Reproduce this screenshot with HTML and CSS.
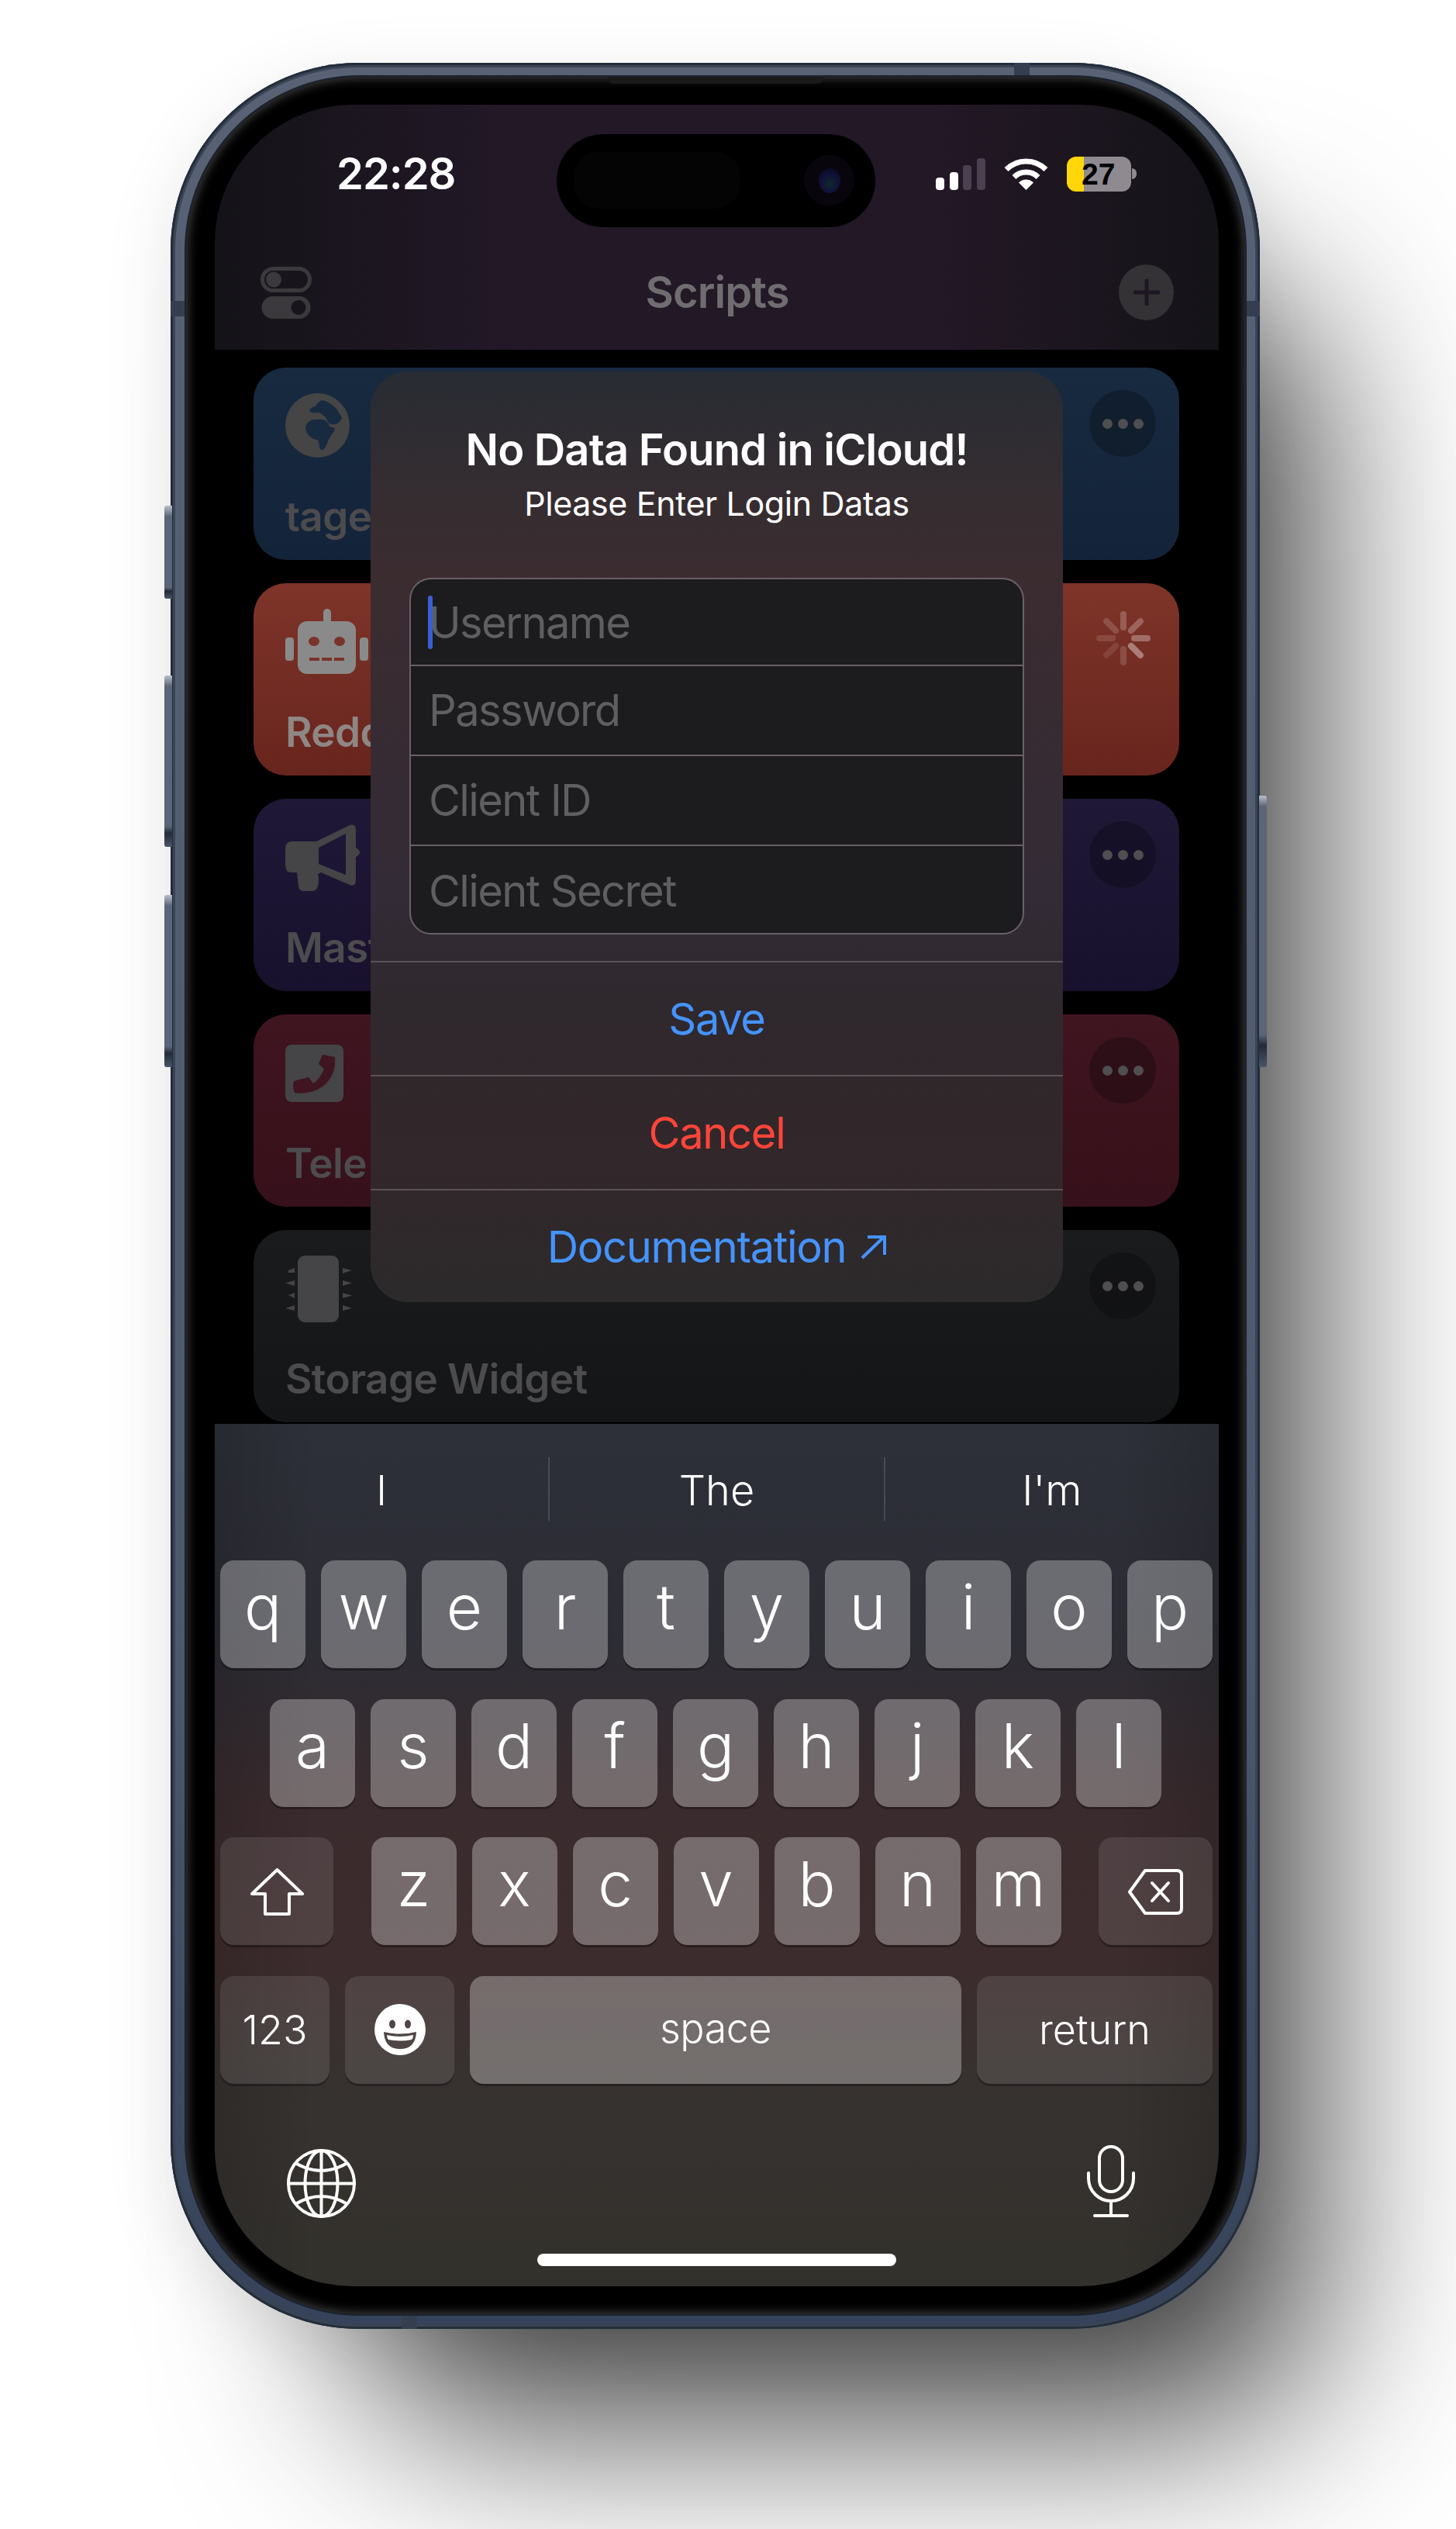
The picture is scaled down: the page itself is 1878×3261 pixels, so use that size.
FILE: index.html
```html
<!DOCTYPE html>
<html lang="en">
<head>
    <meta charset="UTF-8">
    <meta name="viewport" content="width=device-width, initial-scale=1.0">
    <title>Scripts</title>
    <link rel="stylesheet" href="styles.css">
</head>
<body>
<div class="stage">
    <div class="frame">
        <span class="side-btn side-btn-mute"></span>
        <span class="side-btn side-btn-up"></span>
        <span class="side-btn side-btn-down"></span>
        <span class="side-btn side-btn-power"></span>
        <span class="band band-top"></span>
        <span class="band band-left"></span>
        <span class="band band-right"></span>
        <span class="band band-bottom"></span>

        <div class="bezel">
            <span class="speaker"></span>
            <div class="screen">

                <div class="island">
                    <span class="island-sensor"></span>
                    <span class="island-camera"><span class="island-lens"></span></span>
                </div>

                <header class="head">
                    <div class="status">
                        <span class="time">22:28</span>
                        <div class="status-icons">
                            <svg class="ic-signal" viewBox="0 0 64 41">
                                <rect x="0" y="25" width="11" height="16" rx="4" fill="#fff"/>
                                <rect x="18" y="18" width="11" height="23" rx="4" fill="#fff"/>
                                <rect x="35" y="9" width="11" height="32" rx="4" fill="#4a4050"/>
                                <rect x="53" y="0" width="11" height="41" rx="4" fill="#4a4050"/>
                            </svg>
                            <svg class="ic-wifi" viewBox="0 0 57 41">
                                <path d="M3 14.500a36 36 0 0 1 51 0M13 24.500a22 22 0 0 1 31 0" fill="none" stroke="#fff" stroke-width="7"/>
                                <path d="M28.500 41L19 31.500a13.500 13.500 0 0 1 19 0z" fill="#fff"/>
                            </svg>
                            <div class="battery">
                                <div class="battery-body">27</div>
                                <span class="battery-nub"></span>
                            </div>
                        </div>
                    </div>
                    <div class="nav">
                        <svg class="ic-toggles" viewBox="0 0 66 67">
                            <rect x="2.500" y="2.500" width="61" height="28" rx="14" fill="none" stroke="#3b393c" stroke-width="5"/>
                            <circle cx="17" cy="16.500" r="10" fill="#3b393c"/>
                            <path fill-rule="evenodd" d="M16 38h34a14.500 14.500 0 0 1 0 29H16a14.500 14.500 0 0 1 0-29zM49 43a9.500 9.500 0 1 0 0 19a9.500 9.500 0 0 0 0-19z" fill="#3b393c"/>
                        </svg>
                        <h1 class="nav-title">Scripts</h1>
                        <div class="nav-add">
                            <svg viewBox="0 0 34 34" class="ic-plus"><path d="M17 2v30M2 17h30" stroke="#1e1722" stroke-width="5" stroke-linecap="round"/></svg>
                        </div>
                    </div>
                </header>

                <main class="list">
                    <div class="card card-blue">
                        <div class="card-top">
                            <svg class="card-icon ic-earth" viewBox="0 0 83 83">
                                <circle cx="41.500" cy="41.500" r="41.500" fill="#454545"/>
                                <path d="M31 22Q35 17 39 17Q41 12 47 9Q54 10 60 15Q66 19 69 25L73 32Q71 37 67 39Q63 41 60 40Q56 40 55 37L53 33Q48 26 43 25Q36 26 32 24z" fill="#182a40"/>
                                <path d="M26 46Q26 40 30 37Q35 33 41 34Q48 33 53 36Q56 39 57 43L64 45Q63 50 60 53Q56 58 54 65Q51 72 48 73Q44 73 44 70Q44 65 42 60Q36 60 32 56Q27 52 26 46z" fill="#182a40"/>
                            </svg>
                            <div class="more"><i></i><i></i><i></i></div>
                        </div>
                        <div class="card-label">tage</div>
                    </div>

                    <div class="card card-red">
                        <div class="card-top">
                            <svg class="card-icon ic-robot" viewBox="0 0 107 84">
                                <rect x="49" y="0" width="10" height="20" rx="5" fill="#8a8a8a"/>
                                <rect x="16" y="16" width="75" height="68" rx="12" fill="#8a8a8a"/>
                                <rect x="0" y="37" width="11" height="30" rx="4" fill="#8a8a8a"/>
                                <rect x="96" y="37" width="11" height="30" rx="4" fill="#8a8a8a"/>
                                <ellipse cx="37" cy="42" rx="7" ry="6" fill="#7a3329"/>
                                <ellipse cx="70" cy="42" rx="7" ry="6" fill="#7a3329"/>
                                <path d="M31 65H44M47 65H60M63 65H76" stroke="#7a3329" stroke-width="4"/>
                            </svg>
                            <svg class="spinner" viewBox="-35 -35 70 70" stroke="#fff" stroke-width="8" stroke-linecap="round">
                                <line y1="-14" y2="-31" stroke-opacity=".22"/>
                                <line y1="-14" y2="-31" stroke-opacity=".25" transform="rotate(45)"/>
                                <line y1="-14" y2="-31" stroke-opacity=".3" transform="rotate(90)"/>
                                <line y1="-14" y2="-31" stroke-opacity=".38" transform="rotate(135)"/>
                                <line y1="-14" y2="-31" stroke-opacity=".15" transform="rotate(180)"/>
                                <line y1="-14" y2="-31" stroke-opacity=".1" transform="rotate(225)"/>
                                <line y1="-14" y2="-31" stroke-opacity=".12" transform="rotate(270)"/>
                                <line y1="-14" y2="-31" stroke-opacity=".16" transform="rotate(315)"/>
                            </svg>
                        </div>
                        <div class="card-label">Redd</div>
                    </div>

                    <div class="card card-purple">
                        <div class="card-top">
                            <svg class="card-icon ic-horn" viewBox="0 0 96 86">
                                <path fill-rule="evenodd" d="M8 22H40L83 1Q91-1 91 7V30Q96 33 96 36Q96 39 91 42V72Q91 81 83 78L46 62L42 64Q44 70 42 80Q40 86 34 86H24Q18 86 17 80L15 62H8Q0 62 0 52V32Q0 22 8 22zM43 30V51L78 65V12z" fill="#454446"/>
                            </svg>
                            <div class="more"><i></i><i></i><i></i></div>
                        </div>
                        <div class="card-label">Mast</div>
                    </div>

                    <div class="card card-wine">
                        <div class="card-top">
                            <svg class="card-icon ic-phone" viewBox="0 0 75 74">
                                <rect width="75" height="74" rx="8" fill="#454446"/>
                                <path d="M11 47L30 42L36 50Q45 44 50 31L43 25L48 13L64 16Q66 40 48 54Q32 65 12 62Q9 55 11 47z" fill="#3e1520"/>
                            </svg>
                            <div class="more"><i></i><i></i><i></i></div>
                        </div>
                        <div class="card-label">Tele</div>
                    </div>

                    <div class="card card-gray">
                        <div class="card-top">
                            <svg class="card-icon ic-chip" viewBox="0 0 86 86" fill="#454446">
                                <rect x="16" width="53" height="86" rx="9"/>
                                <path d="M4 19L12 16V22L4 22zM0 35.500L12 32V39zM4 51L12 48V55zM0 68L12 64V71z"/>
                                <path d="M74 16L86 19L74 23zM74 32L86 35.500L74 39zM74 48L86 51.500L74 55zM74 64L86 68L74 71z"/>
                            </svg>
                            <div class="more"><i></i><i></i><i></i></div>
                        </div>
                        <div class="card-label">Storage Widget</div>
                    </div>
                </main>

                <section class="keyboard">
                    <div class="suggest">
                        <div class="suggest-cell">I</div>
                        <div class="suggest-cell">The</div>
                        <div class="suggest-cell">I'm</div>
                    </div>

                    <div class="kb-rows">
                        <div class="kb-row">
                            <div class="key">q</div><div class="key">w</div><div class="key">e</div><div class="key">r</div><div class="key">t</div><div class="key">y</div><div class="key">u</div><div class="key">i</div><div class="key">o</div><div class="key">p</div>
                        </div>
                        <div class="kb-row kb-row-center">
                            <div class="key">a</div><div class="key">s</div><div class="key">d</div><div class="key">f</div><div class="key">g</div><div class="key">h</div><div class="key">j</div><div class="key">k</div><div class="key">l</div>
                        </div>
                        <div class="kb-row kb-row-split">
                            <div class="key key-dark key-shift">
                                <svg class="ic-shift" viewBox="0 0 69 61"><path d="M34.500 2L67 33H50V59H19V33H2z" fill="none" stroke="#fff" stroke-width="4" stroke-linejoin="round"/></svg>
                            </div>
                            <div class="kb-letters">
                                <div class="key">z</div><div class="key">x</div><div class="key">c</div><div class="key">v</div><div class="key">b</div><div class="key">n</div><div class="key">m</div>
                            </div>
                            <div class="key key-dark key-delete">
                                <svg class="ic-delete" viewBox="0 0 71 59" fill="none" stroke="#fff" stroke-width="4" stroke-linecap="round" stroke-linejoin="round">
                                    <path d="M22 2H63Q69 2 69 8V51Q69 57 63 57H22L2 29.500z"/>
                                    <path d="M31 18L52 41M52 18L31 41"/>
                                </svg>
                            </div>
                        </div>
                        <div class="kb-row">
                            <div class="key key-dark key-word key-123">123</div>
                            <div class="key key-dark key-emoji">
                                <svg class="ic-emoji" viewBox="0 0 66 66">
                                    <circle cx="33" cy="33" r="33" fill="#fff"/>
                                    <ellipse cx="23" cy="26" rx="4" ry="5.500" fill="#4f4745"/>
                                    <ellipse cx="43" cy="26" rx="4" ry="5.500" fill="#4f4745"/>
                                    <path d="M12 36Q33 41 54 36Q53 58 33 58Q13 58 12 36z" fill="#4f4745"/>
                                    <path d="M16 40Q33 44 50 40Q50 44 48 46Q33 49 18 46Q16 44 16 40z" fill="#fff"/>
                                </svg>
                            </div>
                            <div class="key key-word key-space">space</div>
                            <div class="key key-dark key-word key-return">return</div>
                        </div>
                    </div>

                    <div class="kb-bottom">
                        <svg class="ic-globe" viewBox="0 0 89 89" fill="none" stroke="#fff" stroke-width="4">
                            <circle cx="44.500" cy="44.500" r="42.500"/>
                            <ellipse cx="44.500" cy="44.500" rx="21" ry="42.500"/>
                            <path d="M44.500 2V87M2 44.500H87M11 18Q44.500 38 78 18M11 71Q44.500 51 78 71"/>
                        </svg>
                        <svg class="ic-mic" viewBox="0 0 62 93" fill="none" stroke="#fff" stroke-width="4" stroke-linecap="round">
                            <rect x="16" y="2" width="30" height="58" rx="15"/>
                            <path d="M2 36V43A29 29 0 0 0 60 43V36M31 72V90M10 91H52"/>
                        </svg>
                    </div>
                    <div class="home-bar"></div>
                </section>

                <div class="dialog">
                    <h2 class="dialog-title">No Data Found in iCloud!</h2>
                    <p class="dialog-sub">Please Enter Login Datas</p>
                    <div class="fields">
                        <div class="field field-active"><span class="caret"></span>Username</div>
                        <div class="field">Password</div>
                        <div class="field">Client ID</div>
                        <div class="field">Client Secret</div>
                    </div>
                    <div class="dialog-btn btn-blue">Save</div>
                    <div class="dialog-btn btn-red">Cancel</div>
                    <div class="dialog-btn btn-blue">Documentation
                        <svg class="ic-arrow" viewBox="0 0 33 32" fill="none" stroke="#4593ff" stroke-width="4"><path d="M2 30L29 4M9 3H31V26"/></svg>
                    </div>
                </div>

            </div>
        </div>
    </div>
</div>
</body>
</html>
```

FILE: styles.css
```css
* {
    box-sizing: border-box;
}

body {
    margin: 0;
    background-color: #fff;
    font-family: Inter, "Liberation Sans", sans-serif;
    color: #fff;
    overflow: hidden;
}

.stage {
    width: 1878px;
    height: 3261px;
    padding: 81px 0 0 220px;
    overflow: hidden;
}

/* phone body */
.frame {
    position: relative;
    width: 1405px;
    height: 2922px;
    padding: 18px 19px 19px 20px;
    border-radius: 242px;
    background: linear-gradient(180deg, #586274, #4c586b 70%, #354259);
    box-shadow: inset 0 0 0 3px #242d3c, inset 0 0 0 6px #394454,
        157px 209px 245px -82px rgba(0, 0, 0, .72), 0 20px 90px rgba(0, 0, 0, .1);
}

.side-btn {
    position: absolute;
    left: -8px;
    width: 10px;
    border-radius: 3px 0 0 3px;
    background: linear-gradient(180deg, #b9bfca 0, #5b6577 14px, #5b6577 88%, #232b38 92%, #4a5568 100%);
}

.side-btn-mute { top: 571px; height: 120px; }
.side-btn-up { top: 790px; height: 221px; }
.side-btn-down { top: 1073px; height: 222px; }
.side-btn-power { left: auto; right: -9px; top: 945px; height: 350px; border-radius: 0 3px 3px 0; }

.band {
    position: absolute;
    background-color: #353e4f;
}

.band-top { top: 0; left: 1088px; width: 20px; height: 18px; }
.band-left { top: 307px; left: 0; width: 20px; height: 20px; }
.band-right { top: 307px; right: 0; width: 19px; height: 20px; }
.band-bottom { bottom: 0; left: 298px; width: 20px; height: 19px; }

.bezel {
    position: relative;
    height: 100%;
    padding: 36px 34px 36px 37px;
    border-radius: 224px;
    background-color: #000;
    box-shadow: 0 0 0 2px #1b2230, inset 0 0 14px 1px #4a4a4a;
}

.speaker {
    position: absolute;
    top: 0;
    left: 544px;
    width: 278px;
    height: 9px;
    border-radius: 0 0 8px 8px;
    background-color: #1a1a1b;
}

.screen {
    position: relative;
    display: flex;
    flex-direction: column;
    height: 100%;
    border-radius: 178px;
    background-color: #000;
    overflow: hidden;
}

/* dynamic island */
.island {
    position: absolute;
    z-index: 3;
    top: 38px;
    left: 441px;
    width: 411px;
    height: 120px;
    border-radius: 60px;
    background-color: #000;
}

.island-sensor {
    position: absolute;
    top: 23px;
    left: 23px;
    width: 213px;
    height: 73px;
    border-radius: 30px;
    background-color: #040404;
}

.island-camera {
    position: absolute;
    top: 27px;
    left: 319px;
    display: flex;
    align-items: center;
    justify-content: center;
    width: 65px;
    height: 65px;
    border-radius: 50%;
    background-color: #08060c;
}

.island-lens {
    width: 28px;
    height: 32px;
    border-radius: 50%;
    background: radial-gradient(circle at 50% 62%, #0f2a2a 0, #10123a 45%, #07081f 100%);
}

/* status bar + nav */
.head {
    flex: none;
    height: 316px;
    background: linear-gradient(90deg, #141318, #221826 28%, #231826 72%, #141318);
}

.status {
    display: flex;
    align-items: center;
    justify-content: space-between;
    height: 178px;
    padding: 0 106px 0 157px;
}

.time {
    font-size: 56px;
    font-weight: 600;
    letter-spacing: -1px;
}

.status-icons {
    display: flex;
    align-items: center;
    gap: 24px;
}

.ic-signal { width: 64px; height: 41px; }
.ic-wifi { width: 57px; height: 41px; }

.battery {
    display: flex;
    align-items: center;
    gap: 1px;
}

.battery-body {
    width: 83px;
    height: 45px;
    padding-left: 19px;
    border-radius: 12px;
    background: linear-gradient(90deg, #ffd60a 22px, #8e8a90 22px);
    color: #000;
    font-family: "Liberation Sans Narrow", "Liberation Sans", sans-serif;
    font-size: 39px;
    font-weight: 700;
    line-height: 45px;
}

.battery-nub {
    width: 6px;
    height: 14px;
    border-radius: 0 7px 7px 0;
    background-color: #8e8a90;
}

.nav {
    display: flex;
    align-items: center;
    height: 138px;
    padding: 0 58px 10px 59px;
}

.ic-toggles {
    width: 66px;
    height: 67px;
    margin-right: 5px;
}

.nav-title {
    flex: 1;
    margin: 0;
    color: #6f6d70;
    font-size: 56px;
    font-weight: 600;
    letter-spacing: -.9px;
    text-align: center;
}

.nav-add {
    display: flex;
    align-items: center;
    justify-content: center;
    width: 71px;
    height: 72px;
    border-radius: 50%;
    background-color: #353235;
}

.ic-plus { width: 34px; height: 34px; }

/* script cards */
.list {
    flex: 1;
    display: flex;
    flex-direction: column;
    gap: 30px;
    min-height: 0;
    padding: 23px 51px 0 50px;
    overflow: hidden;
}

.card {
    flex: none;
    display: flex;
    flex-direction: column;
    height: 248px;
    padding: 29px 30px 26px 41px;
    border-radius: 42px;
}

.card-blue { background: linear-gradient(180deg, #182a40, #13243a); }
.card-red { background: linear-gradient(180deg, #7e3429, #68251d); }
.card-purple { background: linear-gradient(180deg, #1f1836, #17112e); }
.card-wine { background: linear-gradient(180deg, #3f1520, #36101a); }
.card-gray { background: linear-gradient(180deg, #1a1b1d, #131517); }

.card-top {
    display: flex;
    align-items: flex-start;
    justify-content: space-between;
}

.card-icon { margin-top: 4px; }
.ic-earth { width: 83px; height: 83px; }
.ic-robot { width: 107px; height: 84px; }
.ic-horn { width: 96px; height: 86px; }
.ic-phone { width: 75px; height: 74px; margin-top: 10px; }
.ic-chip { width: 86px; height: 86px; }

.more {
    display: flex;
    align-items: center;
    justify-content: center;
    gap: 7px;
    width: 86px;
    height: 86px;
    border-radius: 50%;
    background-color: rgba(0, 0, 0, .25);
}

.more i {
    width: 13px;
    height: 13px;
    border-radius: 50%;
    background-color: #4f4e50;
}

.spinner {
    width: 70px;
    height: 70px;
    margin: 7px 7px 0 0;
}

.card-label {
    margin-top: auto;
    color: #4c4b4d;
    font-size: 53px;
    font-weight: 600;
    letter-spacing: -.6px;
    line-height: 60px;
    white-space: nowrap;
}

.card-red .card-label { color: #8e8785; }

/* alert */
.dialog {
    position: absolute;
    z-index: 2;
    top: 344px;
    left: 201px;
    width: 893px;
    height: 1200px;
    padding-top: 66px;
    border-radius: 48px;
    background: linear-gradient(180deg, #282c33 0, #352d31 13%, #3b2c30 22%, #332b36 56%, #2f282d 68%, #32272a 85%, #2c2a2b 100%);
    text-align: center;
    overflow: hidden;
}

.dialog-title {
    margin: 0;
    font-size: 56px;
    font-weight: 600;
    letter-spacing: -.8px;
    line-height: 70px;
    white-space: nowrap;
}

.dialog-sub {
    margin: 6px 0 0;
    font-size: 43px;
    letter-spacing: -.4px;
    line-height: 56px;
}

.fields {
    margin: 68px 50px 34px;
    border: 2px solid #6a6068;
    border-radius: 28px;
    background-color: #1c1c1e;
    overflow: hidden;
}

.field {
    position: relative;
    height: 116px;
    padding-left: 23px;
    border-top: 2px solid #6a6068;
    color: #5f5f62;
    font-size: 56px;
    letter-spacing: -1.6px;
    line-height: 114px;
    text-align: left;
}

.field:first-child {
    height: 110px;
    border-top: none;
    line-height: 112px;
}

.field:last-child {
    height: 114px;
    line-height: 116px;
}

.caret {
    position: absolute;
    top: 21px;
    left: 22px;
    width: 6px;
    height: 69px;
    border-radius: 3px;
    background-color: #3c5fd0;
}

.dialog-btn {
    display: flex;
    align-items: center;
    justify-content: center;
    gap: 19px;
    height: 147px;
    border-top: 2px solid #5c5258;
    font-size: 56px;
    letter-spacing: -1.3px;
}

.btn-blue { color: #4593ff; }
.btn-red { color: #ff453a; }
.ic-arrow { width: 33px; height: 32px; }

/* keyboard */
.keyboard {
    position: relative;
    z-index: 1;
    flex: none;
    height: 1112px;
    background:
        linear-gradient(90deg, rgba(0, 0, 0, .14), transparent 10%, transparent 90%, rgba(0, 0, 0, .14)),
        linear-gradient(180deg, #2e3039 0, #2b2c34 24%, #3a2b2e 44%, #3d2c2d 62%, #363230 78%, #33312c 100%);
}

.suggest {
    display: flex;
    align-items: center;
    height: 168px;
    margin-bottom: 8px;
}

.suggest-cell {
    flex: 1;
    height: 82px;
    font-size: 54px;
    font-weight: 300;
    line-height: 85px;
    text-align: center;
}

.suggest-cell + .suggest-cell {
    border-left: 2px solid #484a54;
}

.kb-rows {
    display: flex;
    flex-direction: column;
    gap: 39.500px;
    padding: 0 8px 0 7px;
}

.kb-row {
    display: flex;
    gap: 20px;
}

.kb-row-center { justify-content: center; padding-right: 2px; }
.kb-row-split { justify-content: space-between; }

.kb-letters {
    display: flex;
    gap: 20px;
}

.key {
    display: flex;
    align-items: center;
    justify-content: center;
    flex: none;
    width: 110px;
    height: 139px;
    padding-bottom: 20px;
    border-radius: 18px;
    background-color: rgba(255, 255, 255, .3);
    box-shadow: 0 3px 0 rgba(0, 0, 0, .3);
    font-size: 80px;
    font-weight: 300;
}

.key-dark { background-color: rgba(255, 255, 255, .1); }

.key-shift { width: 146px; padding-bottom: 0; }
.key-delete { width: 147px; padding-bottom: 0; }
.key-word { padding-bottom: 0; font-size: 52px; }
.key-123 { width: 141px; }
.key-emoji { width: 141px; padding-bottom: 0; }
.key-space { width: 634px; padding-bottom: 3px; letter-spacing: -.5px; }
.key-return { width: 304px; }

.ic-shift { width: 69px; height: 61px; margin-top: 2px; }
.ic-delete { width: 71px; height: 59px; margin-top: 2px; }
.ic-emoji { width: 66px; height: 66px; }

.kb-bottom {
    display: flex;
    align-items: center;
    justify-content: space-between;
    height: 100px;
    margin-top: 76px;
    padding: 0 108px 0 93px;
}

.ic-globe { width: 89px; height: 89px; margin-top: 6px; }
.ic-mic { width: 62px; height: 93px; }

.home-bar {
    width: 463px;
    height: 16px;
    margin: 43px auto 0;
    border-radius: 8px;
    background-color: #fff;
}
```
